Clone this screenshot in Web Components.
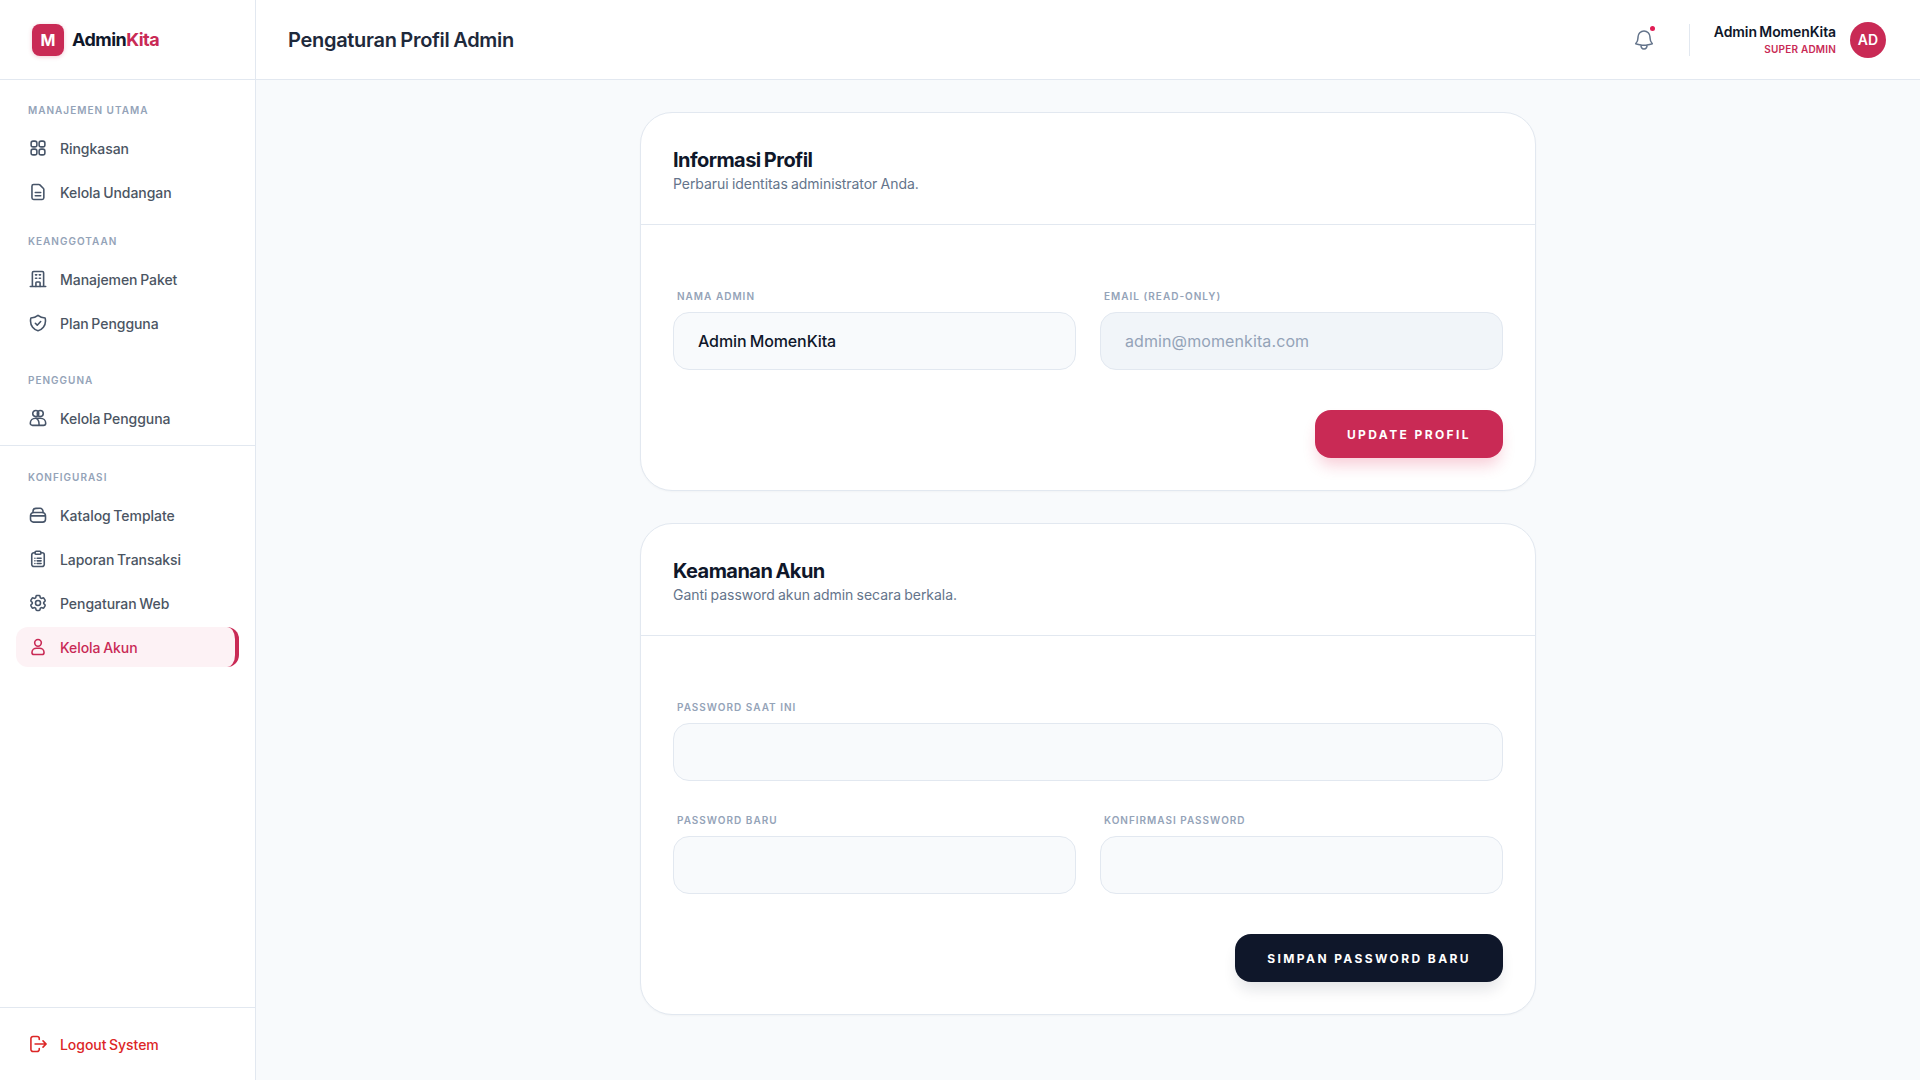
<!DOCTYPE html>
<html lang="id">
<head>
<meta charset="utf-8">
<title>Pengaturan Profil Admin</title>
<style>
html,body{margin:0;height:100%}
body{font-family:Inter,"Liberation Sans",sans-serif;background:#f8fafc;color:#0f172a;overflow:hidden}
app-shell{height:100vh}
</style>
</head>
<body>
<app-shell>
  <admin-sidebar slot="sidebar">
    <nav-section label="MANAJEMEN UTAMA" style="--top:23px">
      <nav-item icon="grid">Ringkasan</nav-item>
      <nav-item icon="doc">Kelola Undangan</nav-item>
    </nav-section>
    <nav-section label="KEANGGOTAAN" style="--top:22px">
      <nav-item icon="building">Manajemen Paket</nav-item>
      <nav-item icon="shield">Plan Pengguna</nav-item>
    </nav-section>
    <nav-section label="PENGGUNA" style="--top:30px">
      <nav-item icon="users">Kelola Pengguna</nav-item>
    </nav-section>
    <nav-section label="KONFIGURASI" divided style="--top:7px">
      <nav-item icon="box">Katalog Template</nav-item>
      <nav-item icon="clipboard">Laporan Transaksi</nav-item>
      <nav-item icon="cog">Pengaturan Web</nav-item>
      <nav-item icon="user" active>Kelola Akun</nav-item>
    </nav-section>
    <nav-item slot="footer" icon="logout" danger>Logout System</nav-item>
  </admin-sidebar>
  <admin-header slot="header" heading="Pengaturan Profil Admin"></admin-header>
  <form-card heading="Informasi Profil" sub="Perbarui identitas administrator Anda.">
    <form-row>
      <form-field label="NAMA ADMIN" value="Admin MomenKita"></form-field>
      <form-field label="EMAIL (READ-ONLY)" value="admin@momenkita.com" readonly></form-field>
    </form-row>
    <action-button slot="actions">UPDATE PROFIL</action-button>
  </form-card>
  <form-card heading="Keamanan Akun" sub="Ganti password akun admin secara berkala.">
    <form-row single>
      <form-field label="PASSWORD SAAT INI" type="password"></form-field>
    </form-row>
    <form-row>
      <form-field label="PASSWORD BARU" type="password"></form-field>
      <form-field label="KONFIRMASI PASSWORD" type="password"></form-field>
    </form-row>
    <action-button slot="actions" dark>SIMPAN PASSWORD BARU</action-button>
  </form-card>
</app-shell>
<script>
const ICONS = {
  grid:'<rect x="3.75" y="3.75" width="6.9" height="6.9" rx="2.4"/><rect x="13.35" y="3.75" width="6.9" height="6.9" rx="2.4"/><rect x="3.75" y="13.35" width="6.9" height="6.9" rx="2.4"/><rect x="13.35" y="13.35" width="6.9" height="6.9" rx="2.4"/>',
  doc:'<path d="M6.75 3h6.4c.4 0 .78.16 1.06.44l4.35 4.35c.28.28.44.66.44 1.06V19a2 2 0 0 1-2 2H6.75a2 2 0 0 1-2-2V5a2 2 0 0 1 2-2Z"/><path d="M8.75 12.5h6.5M8.75 16.5h6.5"/>',
  building:'<path d="M2.75 21h18.5M5.25 21V4.5A1.5 1.5 0 0 1 6.75 3h10.5a1.5 1.5 0 0 1 1.5 1.5V21"/><path d="M9 7h1.5M13.5 7H15M9 11h1.5M13.5 11H15M9.5 21v-4.5c0-.6.5-1 1-1h3c.5 0 1 .4 1 1V21"/>',
  shield:'<path d="M12 2.9c2.4 2 5.3 3.1 8.6 3.2.3 1.1.4 2.4.4 3.6 0 5.6-3.8 10.3-9 11.6C6.8 20 3 15.3 3 9.7c0-1.2.1-2.5.4-3.6C6.7 6 9.6 4.9 12 2.9Z"/><path d="m8.8 12.3 2.3 2.3 4.1-4.4"/>',
  users:'<circle cx="9.3" cy="6.6" r="3.6"/><circle cx="14.7" cy="6.6" r="3.6"/><path d="M2.75 18.2c0-3.4 2.9-6 6.5-6h5.5c3.6 0 6.5 2.6 6.5 6 0 1.6-1.2 2.6-2.7 2.6H5.45c-1.5 0-2.7-1-2.7-2.6Z"/><path d="M9.5 12.4c2.4.9 4 3.3 3.8 8.2"/>',
  box:'<path d="M3 13.5c0-2.5 1.5-4.5 4-4.5h10c2.500 0 4 2 4 4.500V17a3.500 3.500 0 0 1-3.500 3.500h-11A3.500 3.500 0 0 1 3 17v-3.500Z"/><path d="M3.200 13h17.600"/><path d="M6 9V7.500A3.500 3.500 0 0 1 9.500 4h5A3.500 3.500 0 0 1 18 7.500V9"/>',
  clipboard:'<path d="M8.500 4.500H7a2.500 2.500 0 0 0-2.500 2.500v11.500A2.500 2.500 0 0 0 7 21h10a2.500 2.500 0 0 0 2.500-2.500V7A2.500 2.500 0 0 0 17 4.500h-1.500"/><rect x="8.500" y="2.750" width="7" height="3.500" rx="1.300"/><path d="M8.300 11h.01M8.300 14.200h.01M8.300 17.300h.01M11 11h4.700M11 14.200h4.700M11 17.300h4.700"/>',
  cog:'<path d="M9.594 3.940c.09-.542.560-.940 1.110-.940h2.593c.550 0 1.020.398 1.110.940l.213 1.281c.063.374.313.686.645.870.074.040.147.083.220.127.325.196.720.257 1.075.124l1.217-.456a1.125 1.125 0 0 1 1.370.490l1.296 2.247a1.125 1.125 0 0 1-.260 1.431l-1.003.827c-.293.241-.438.613-.430.992a7.723 7.723 0 0 1 0 .255c-.008.378.137.750.430.991l1.004.827c.424.350.534.955.260 1.430l-1.298 2.247a1.125 1.125 0 0 1-1.369.491l-1.217-.456c-.355-.133-.750-.072-1.076.124a6.470 6.470 0 0 1-.220.128c-.331.183-.581.495-.644.869l-.213 1.281c-.090.543-.560.940-1.110.940h-2.594c-.550 0-1.019-.398-1.110-.940l-.213-1.281c-.062-.374-.312-.686-.644-.870a6.520 6.520 0 0 1-.220-.127c-.325-.196-.720-.257-1.076-.124l-1.217.456a1.125 1.125 0 0 1-1.369-.490l-1.297-2.247a1.125 1.125 0 0 1 .260-1.431l1.004-.827c.292-.240.437-.613.430-.991a6.932 6.932 0 0 1 0-.255c.007-.380-.138-.751-.430-.992l-1.004-.827a1.125 1.125 0 0 1-.260-1.430l1.297-2.247a1.125 1.125 0 0 1 1.370-.491l1.216.456c.356.133.751.072 1.076-.124.072-.044.146-.086.220-.128.332-.183.582-.495.644-.869l.214-1.280Z"/><circle cx="12" cy="12" r="3"/>',
  user:'<circle cx="12" cy="7" r="4"/><path d="M4.750 18.500c0-3 2.700-5 5.500-5h3.500c2.800 0 5.500 2 5.500 5 0 1.500-1 2.500-2.500 2.500h-9.500c-1.500 0-2.500-1-2.500-2.500Z"/>',
  logout:'<path d="M13.500 6.500V5.500A2.500 2.500 0 0 0 11 3H6a2.500 2.500 0 0 0-2.500 2.500v13A2.500 2.500 0 0 0 6 21h5a2.500 2.500 0 0 0 2.500-2.500v-1"/><path d="M8.500 12h13M18 8.250 21.750 12 18 15.750"/>',
  bell:'<path d="M14.857 17.082a23.848 23.848 0 0 0 5.454-1.310A8.967 8.967 0 0 1 18 9.750V9A6 6 0 0 0 6 9v.750a8.967 8.967 0 0 1-2.312 6.022c1.733.640 3.560 1.085 5.455 1.310m5.714 0a24.255 24.255 0 0 1-5.714 0m5.714 0a3 3 0 1 1-5.714 0"/>'
};
function svg(name,w=20,sw=1.9){
  return `<svg xmlns="http://www.w3.org/2000/svg" width="${w}" height="${w}" viewBox="0 0 24 24" fill="none" stroke="currentColor" stroke-width="${sw}" stroke-linecap="round" stroke-linejoin="round" aria-hidden="true">${ICONS[name]}</svg>`;
}
const esc = s => (s||'').replace(/&/g,'&amp;').replace(/"/g,'&quot;').replace(/</g,'&lt;');
class Base extends HTMLElement{
  constructor(){super();this.attachShadow({mode:'open'});}
  connectedCallback(){this.shadowRoot.innerHTML=this.render();}
}
customElements.define('app-shell',class extends Base{render(){return `<style>
:host{display:flex;width:100%}
.col{flex:1;min-width:0;display:flex;flex-direction:column;height:100%}
.content{flex:1;padding:32px 0;display:flex;flex-direction:column;align-items:center;gap:32px;overflow:hidden}
</style>
<slot name="sidebar"></slot>
<div class="col"><slot name="header"></slot><div class="content"><slot></slot></div></div>`}});
customElements.define('admin-sidebar',class extends Base{render(){return `<style>
:host{display:flex;flex-direction:column;width:256px;box-sizing:border-box;height:100%;background:#fff;border-right:1px solid #e2e8f0;flex:none}
.brand{height:80px;box-sizing:border-box;border-bottom:1px solid #e2e8f0;display:flex;align-items:center;gap:8px;padding-left:32px}
.mark{width:32px;height:32px;border-radius:8px;background:#c92a55;color:#fff;font-weight:700;font-size:16px;display:flex;align-items:center;justify-content:center;box-shadow:0 1px 4px rgba(201,42,85,.25)}
.name{font-size:18px;font-weight:700;letter-spacing:-.55px;color:#0f172a}
.name b{color:#c92a55;font-weight:700}
nav{flex:1;display:flex;flex-direction:column}
.foot{height:73px;box-sizing:border-box;border-top:1px solid #e2e8f0;padding:16px}
</style>
<div class="brand"><div class="mark">M</div><div class="name">Admin<b>Kita</b></div></div>
<nav><slot></slot></nav>
<div class="foot"><slot name="footer"></slot></div>`}});
customElements.define('nav-section',class extends Base{render(){
 const d=this.hasAttribute('divided');
 return `<style>
:host{display:block;margin-top:var(--top,0)}
.rule{height:1px;background:#e2e8f0;margin-bottom:24px}
.label{font-size:10px;line-height:15px;font-weight:600;letter-spacing:1px;color:#94a3b8;margin:0 0 10px 28px}
.items{display:flex;flex-direction:column;gap:4px;padding:0 16px}
</style>${d?'<div class="rule"></div>':''}<div class="label">${esc(this.getAttribute('label'))}</div><div class="items"><slot></slot></div>`}});
customElements.define('nav-item',class extends Base{render(){
 const a=this.hasAttribute('active'),dg=this.hasAttribute('danger');
 return `<style>
:host{display:block}
a{display:flex;align-items:center;gap:12px;height:40px;box-sizing:border-box;padding-left:12px;border-radius:12px;font-size:14px;font-weight:500;letter-spacing:-.05px;word-spacing:-1px;color:${dg?'#dc2626':a?'#c92a55':'#4b5563'};text-decoration:none;${a?'background:#fdf2f5;border-right:4px solid #c92a55;':''}}
svg{flex:none;color:${dg?'#dc2626':a?'#c92a55':'#475569'}}
</style><a href="#">${svg(this.getAttribute('icon'))}<span><slot></slot></span></a>`}});
customElements.define('admin-header',class extends Base{render(){return `<style>
:host{display:flex;align-items:center;justify-content:space-between;height:80px;box-sizing:border-box;flex:none;background:#fff;border-bottom:1px solid #e2e8f0;padding:0 34px 0 32px}
h1{margin:0;font-size:20px;font-weight:600;letter-spacing:-.3px;word-spacing:-1px;color:#1e293b}
.right{display:flex;align-items:center}
.bell{position:relative;width:24px;height:24px;color:#64748b;margin-right:33px}
.bell i{position:absolute;top:-2px;right:1px;width:5px;height:5px;border-radius:50%;background:#e11d55}
.sep{width:1px;height:32px;background:#e2e8f0;margin-right:24px}
.who{text-align:right;margin-right:14px}
.n{font-size:14px;line-height:18px;font-weight:600;letter-spacing:-.1px;word-spacing:-1px;color:#0f172a}
.r{font-size:10px;line-height:15px;font-weight:600;color:#c92a55;letter-spacing:.2px;margin-top:1px}
.av{width:36px;height:36px;border-radius:50%;background:#c92a55;color:#fff;font-size:14px;font-weight:600;display:flex;align-items:center;justify-content:center}
</style><h1>${esc(this.getAttribute('heading'))}</h1>
<div class="right"><div class="bell">${svg('bell',24,1.5)}<i></i></div><div class="sep"></div>
<div class="who"><div class="n">Admin MomenKita</div><div class="r">SUPER ADMIN</div></div><div class="av">AD</div></div>`}});
customElements.define('form-card',class extends Base{render(){return `<style>
:host{display:block;width:896px;box-sizing:border-box;background:#fff;border:1px solid #e2e8f0;border-radius:32px;box-shadow:0 1px 2px rgba(15,23,42,.03);flex:none}
header{height:112px;box-sizing:border-box;padding:32px;border-bottom:1px solid #e2e8f0}
h2{margin:0;font-size:20px;line-height:30px;font-weight:700;letter-spacing:-.55px;word-spacing:-1px;color:#0f172a}
p{margin:0;font-size:14px;line-height:18px;color:#64748b;letter-spacing:-.05px;word-spacing:-.6px}
.body{padding:64px 32px 32px;display:flex;flex-direction:column;gap:32px}
.actions{display:flex;justify-content:flex-end;margin-top:8px}
</style><header><h2>${esc(this.getAttribute('heading'))}</h2><p>${esc(this.getAttribute('sub'))}</p></header>
<div class="body"><slot></slot><div class="actions"><slot name="actions"></slot></div></div>`}});
customElements.define('form-row',class extends Base{render(){return `<style>
:host{display:grid;grid-template-columns:${this.hasAttribute('single')?'1fr':'1fr 1fr'};gap:24px}
</style><slot></slot>`}});
customElements.define('form-field',class extends Base{render(){
 const ro=this.hasAttribute('readonly');
 return `<style>
:host{display:block}
label{display:block;font-size:10px;line-height:15px;font-weight:600;letter-spacing:1px;color:#94a3b8;margin:0 0 8px 4px}
input{display:block;width:100%;height:58px;box-sizing:border-box;padding:0 24px;border:1px solid #e2e8f0;border-radius:16px;background:${ro?'#f1f5f9':'#f8fafc'};font:500 16px Inter,"Liberation Sans",sans-serif;letter-spacing:-.1px;word-spacing:-1px;color:${ro?'#94a3b8':'#0f172a'};outline:none}
input[readonly]{font-weight:400;letter-spacing:.1px}
</style><label>${esc(this.getAttribute('label'))}</label>
<input type="${esc(this.getAttribute('type')||'text')}" value="${esc(this.getAttribute('value'))}"${ro?' readonly':''}>`}});
customElements.define('action-button',class extends Base{render(){
 const d=this.hasAttribute('dark');
 return `<style>
:host{display:inline-block}
button{height:48px;padding:0 32px;border:0;border-radius:16px;background:${d?'#0f172a':'#c92a55'};color:#fff;font:700 12px Inter,"Liberation Sans",sans-serif;letter-spacing:2.4px;box-shadow:${d?'0 10px 15px -3px rgba(15,23,42,.12)':'0 10px 15px -3px rgba(225,29,72,.22)'}}
</style><button type="button"><slot></slot></button>`}});
</script>
</body>
</html>
